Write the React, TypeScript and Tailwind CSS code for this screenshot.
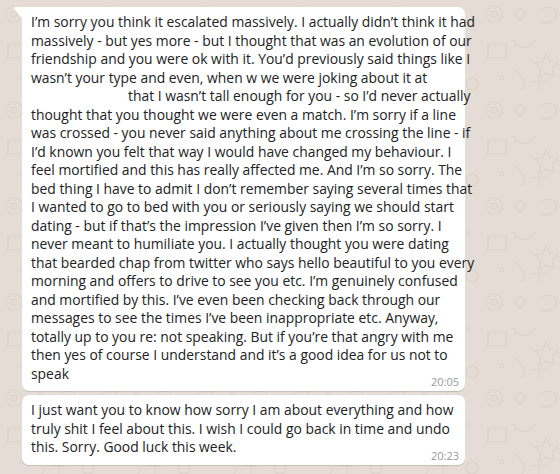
import React from 'react'

const first = [
  'I’m sorry you think it escalated massively. I actually didn’t think it had',
  'massively - but yes more - but I thought that was an evolution of our',
  'friendship and you were ok with it. You’d previously said things like I',
  'wasn’t your type and even, when w we were joking about it at',
  'that I wasn’t tall enough for you - so I’d never actually',
  'thought that you thought we were even a match. I’m sorry if a line',
  'was crossed - you never said anything about me crossing the line - if',
  'I’d known you felt that way I would have changed my behaviour. I',
  'feel mortified and this has really affected me. And I’m so sorry. The',
  'bed thing I have to admit I don’t remember saying several times that',
  'I wanted to go to bed with you or seriously saying we should start',
  'dating - but if that’s the impression I’ve given then I’m so sorry. I',
  'never meant to humiliate you. I actually thought you were dating',
  'that bearded chap from twitter who says hello beautiful to you every',
  'morning and offers to drive to see you etc. I’m genuinely confused',
  'and mortified by this. I’ve even been checking back through our',
  'messages to see the times I’ve been inappropriate etc. Anyway,',
  'totally up to you re: not speaking. But if you’re that angry with me',
  'then yes of course I understand and it’s a good idea for us not to',
  'speak',
]

const second = [
  'I just want you to know how sorry I am about everything and how',
  'truly shit I feel about this. I wish I could go back in time and undo',
  'this. Sorry. Good luck this week.',
]

function Bubble({ lines, time, tail }: { lines: string[]; time: string; tail?: boolean }) {
  return (
    <div
      className={`relative w-[443px] bg-white pt-[6px] pb-[8px] pl-[9px] pr-[7px] shadow-[0_1px_0.5px_rgba(0,0,0,0.13)] ${
        tail ? 'rounded-[7px] rounded-tl-none' : 'rounded-[7px]'
      }`}
    >
      {tail && (
        <svg className="absolute -left-[8px] top-0" width="8" height="13" viewBox="0 0 8 13">
          <path d="M8 0H1.5C0.2 0 -0.3 1.2 0.5 2.2L8 11.5Z" fill="#ffffff" />
        </svg>
      )}
      <div className="text-[13.9px] leading-[18.5px] text-[#222222] whitespace-nowrap">
        {lines.map((l, i) => (
          // the 5th line of the long message starts after a blanked-out gap
          <div key={i} className={tail && i === 4 ? 'pl-[97px]' : ''}>
            {l}
          </div>
        ))}
      </div>
      <span className="absolute right-[6px] bottom-[2px] text-[11px] leading-[15px] text-[#999999]">{time}</span>
    </div>
  )
}

function Doodles() {
  return (
    <svg className="absolute inset-0" width="560" height="474">
      <defs>
        <pattern id="wa" width="96" height="96" patternUnits="userSpaceOnUse">
          <g fill="none" stroke="#dbd2c9" strokeWidth="1.1" strokeLinecap="round">
            <circle cx="14" cy="14" r="8" />
            <circle cx="14" cy="14" r="3" />
            <path d="M40 8l6 6-6 6-6-6z" />
            <path d="M62 10c6-6 16-2 14 6s-12 8-16 4" />
            <circle cx="84" cy="40" r="2" />
            <path d="M8 44h18v14H8z" />
            <path d="M34 40c4 10 16 10 20 0" />
            <path d="M66 54l4 8 8 1-6 6 2 8-8-4-7 4 2-8-6-6 8-1z" />
            <circle cx="22" cy="78" r="2" />
            <path d="M34 70c8 4 14 14 8 20" />
            <path d="M52 82h14M59 75v14" />
            <circle cx="88" cy="84" r="6" />
          </g>
        </pattern>
      </defs>
      <rect width="560" height="474" fill="url(#wa)" />
    </svg>
  )
}

export default function App() {
  return (
    <div
      className="relative w-[560px] h-[474px] overflow-hidden bg-[#e5ddd5]"
      style={{ fontFamily: '"Open Sans", "Liberation Sans", sans-serif' }}
    >
      <Doodles />
      <div className="relative pl-[22px] pt-[7px] flex flex-col gap-[4px]">
        <Bubble lines={first} time="20:05" tail />
        <Bubble lines={second} time="20:23" />
      </div>
    </div>
  )
}
